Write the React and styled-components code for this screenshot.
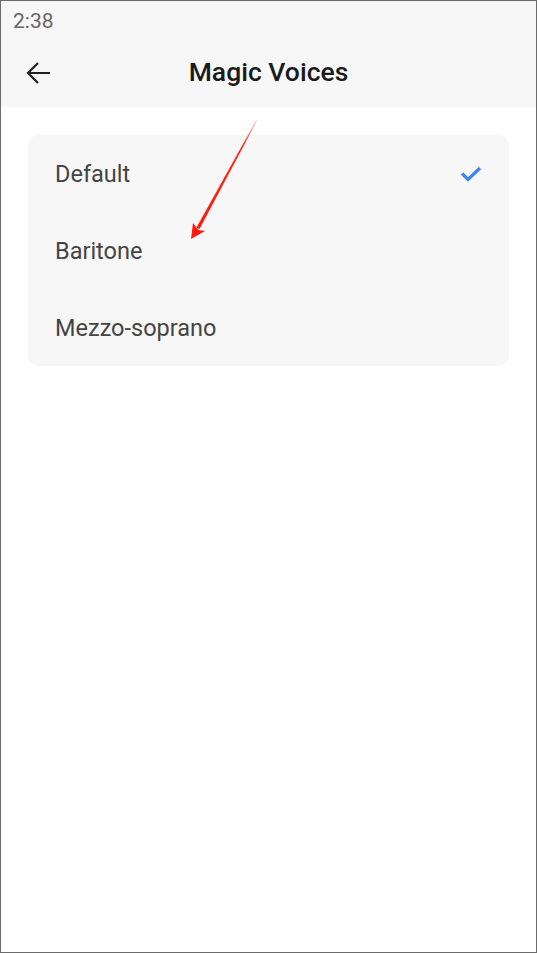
import React from "react";
import styled, { createGlobalStyle } from "styled-components";

const GlobalStyle = createGlobalStyle`
  html, body {
    margin: 0;
    padding: 0;
    background: #ffffff;
  }
  body {
    font-family: Roboto, "Liberation Sans", sans-serif;
  }
`;

const Frame = styled.div`
  position: relative;
  box-sizing: border-box;
  width: 537px;
  height: 953px;
  border: 1px solid #6b6b6b;
  background: #ffffff;
  overflow: hidden;
`;

const Notch = styled.div`
  position: absolute;
  top: -1px;
  left: 155px;
  width: 45px;
  height: 1px;
  background: #000;
`;

const StatusBar = styled.div`
  box-sizing: border-box;
  height: 37px;
  display: flex;
  align-items: center;
  padding: 3px 0 0 12px;
  background: #f7f7f7;
  color: #666666;
  font-size: 21px;
  line-height: 1;
`;

const Header = styled.div`
  position: relative;
  box-sizing: border-box;
  height: 69px;
  display: flex;
  align-items: center;
  justify-content: center;
  padding-bottom: 2px;
  background: #f7f7f7;
`;

const BackButton = styled.button`
  position: absolute;
  left: 21px;
  top: 50%;
  transform: translateY(-50%);
  width: 32px;
  height: 32px;
  padding: 0;
  border: 0;
  background: none;
  display: flex;
  align-items: center;
  justify-content: center;
`;

const Title = styled.h1`
  margin: 0;
  font-size: 26.5px;
  font-weight: 500;
  color: #1b1b1b;
`;

const Content = styled.div`
  padding: 28px 27px;
`;

const Card = styled.ul`
  list-style: none;
  margin: 0;
  padding: 0;
  width: 481px;
  background: #f7f7f7;
  border-radius: 10px;
`;

const Row = styled.li`
  height: 77px;
  display: flex;
  align-items: center;
  justify-content: space-between;
  padding: 0 27px;
  font-size: 23.5px;
  color: #444444;
`;

const Annotation = styled.svg`
  position: absolute;
  left: 0;
  top: 0;
  pointer-events: none;
`;

const options = [
  { label: "Default", selected: true },
  { label: "Baritone" },
  { label: "Mezzo-soprano" },
];

const ArrowLeft = () => (
  <svg width="26" height="24" viewBox="0 0 26 24" fill="none">
    <path
      d="M25 12H3M13 2L3 12l10 10"
      stroke="#222"
      strokeWidth="2.2"
    />
  </svg>
);

const Check = () => (
  <svg width="22" height="16" viewBox="0 0 22 16" fill="none">
    <path d="M2 7.5l6 6L20 2" stroke="#3d86f0" strokeWidth="3.2" />
  </svg>
);

export default function App() {
  return (
    <>
      <GlobalStyle />
      <Frame>
        <Notch />
        <StatusBar>2:38</StatusBar>
        <Header>
          <BackButton aria-label="Back">
            <ArrowLeft />
          </BackButton>
          <Title>Magic Voices</Title>
        </Header>
        <Content>
          <Card>
            {options.map((o) => (
              <Row key={o.label}>
                <span>{o.label}</span>
                {o.selected && <Check />}
              </Row>
            ))}
          </Card>
        </Content>
        <Annotation width="537" height="953">
          <defs>
            <linearGradient id="tail" x1="256" y1="118" x2="200" y2="220" gradientUnits="userSpaceOnUse">
              <stop offset="0" stopColor="#ff2a1a" stopOpacity="0.15" />
              <stop offset="0.25" stopColor="#ff2a1a" stopOpacity="1" />
              <stop offset="1" stopColor="#ff1a0a" />
            </linearGradient>
          </defs>
          <polygon
            points="255.6,118.5 256.4,119 198.5,228 195.5,226.5"
            fill="url(#tail)"
          />
          <polygon points="190,238 192,222 197.5,229 204,230" fill="#ff1a0a" />
        </Annotation>
      </Frame>
    </>
  );
}
